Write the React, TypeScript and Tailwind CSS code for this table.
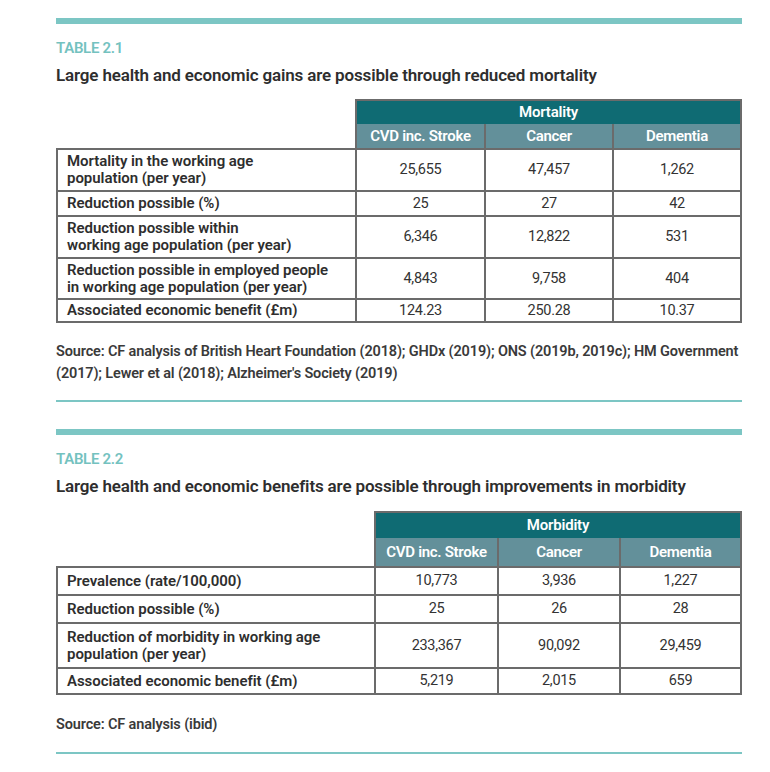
const font = { fontFamily: 'Roboto,"Liberation Sans",sans-serif' };

type Row = { label: string[]; values: string[]; h: string };

function DataTable({
  group,
  cols,
  rows,
  spacerW,
  labelW,
  subW,
  colW,
  headH,
  subH,
}: {
  group: string;
  cols: string[];
  rows: Row[];
  spacerW: string;
  labelW: string;
  subW: string[];
  colW: string[];
  headH: string;
  subH: string;
}) {
  return (
    <div className="w-[686px]">
      <div className="flex">
        <div className={spacerW} />
        <div className="flex-1 border-2 border-b-0 border-[#6b6b6b]">
          <div className={`${headH} bg-[#0f6b73] text-white font-semibold text-[15px] tracking-[-0.2px] flex items-center justify-center`}>
            {group}
          </div>
          <div className="flex">
            {cols.map((c, i) => (
              <div
                key={c}
                className={`${subW[i]} ${subH} ${i > 0 ? 'border-l-2 border-[#6b6b6b]' : ''} bg-[#63909a] text-white font-semibold text-[15px] tracking-[-0.3px] flex items-center justify-center`}
              >
                {c}
              </div>
            ))}
          </div>
        </div>
      </div>
      <div className="border-2 border-[#6b6b6b]">
        {rows.map((r, ri) => (
          <div key={ri} className={`flex ${r.h} ${ri > 0 ? 'border-t-2 border-[#6b6b6b]' : ''}`}>
            <div
              className={`${labelW} pl-[9px] flex flex-col justify-center text-[15px] leading-[17px] font-semibold tracking-[-0.05px] text-[#2e2e2e]`}
            >
              {r.label.map((l) => (
                <span key={l} className="whitespace-nowrap">
                  {l}
                </span>
              ))}
            </div>
            {r.values.map((v, i) => (
              <div
                key={i}
                className={`${colW[i]} border-l-2 border-[#6b6b6b] flex items-center justify-center text-[14.5px] tracking-[-0.3px] text-[#333]`}
              >
                {v}
              </div>
            ))}
          </div>
        ))}
      </div>
    </div>
  );
}

export default function App() {
  return (
    <div className="bg-white w-[770px] min-h-[772px]" style={font}>
      <div className="ml-[56px] w-[686px] pt-[18px]">
        <div className="h-[6px] bg-[#7cc6c4]" />
        <div className="mt-[14px] text-[#74c2bf] font-semibold text-[15px] leading-[20px] tracking-[-0.3px]">TABLE 2.1</div>
        <h2 className="mt-[6px] text-[#2e2e2e] font-semibold text-[17px] leading-[22px] tracking-[-0.15px] whitespace-nowrap">
          Large health and economic gains are possible through reduced mortality
        </h2>
        <div className="mt-[13px]">
          <DataTable
            group="Mortality"
            cols={['CVD inc. Stroke', 'Cancer', 'Dementia']}
            spacerW="w-[299px]"
            labelW="w-[297px]"
            subW={['w-[127px]', 'w-[128px]', 'w-[128px]']}
            colW={['w-[129px]', 'w-[128px]', 'w-[128px]']}
            headH="h-[23px]"
            subH="h-[24px]"
            rows={[
              { label: ['Mortality in the working age', 'population (per year)'], values: ['25,655', '47,457', '1,262'], h: 'h-[40px]' },
              { label: ['Reduction possible (%)'], values: ['25', '27', '42'], h: 'h-[25px]' },
              { label: ['Reduction possible within', 'working age population (per year)'], values: ['6,346', '12,822', '531'], h: 'h-[42px]' },
              { label: ['Reduction possible in employed people', 'in working age population (per year)'], values: ['4,843', '9,758', '404'], h: 'h-[41px]' },
              { label: ['Associated economic benefit (£m)'], values: ['124.23', '250.28', '10.37'], h: 'h-[23px]' },
            ]}
          />
        </div>
        <p className="mt-[18px] text-[14.5px] leading-[22px] font-semibold tracking-[-0.15px] text-[#3a3a3a] whitespace-nowrap">
          Source: CF analysis of British Heart Foundation (2018); GHDx (2019); ONS (2019b, 2019c); HM Government
          <br />
          (2017); Lewer et al (2018); Alzheimer's Society (2019)
        </p>
        <div className="mt-[15px] h-[2px] bg-[#7cc6c4]" />
        <div className="mt-[27px] h-[6px] bg-[#7cc6c4]" />
        <div className="mt-[14px] text-[#74c2bf] font-semibold text-[15px] leading-[20px] tracking-[-0.3px]">TABLE 2.2</div>
        <h2 className="mt-[6px] text-[#2e2e2e] font-semibold text-[17px] leading-[22px] tracking-[-0.15px] whitespace-nowrap">
          Large health and economic benefits are possible through improvements in morbidity
        </h2>
        <div className="mt-[14px]">
          <DataTable
            group="Morbidity"
            cols={['CVD inc. Stroke', 'Cancer', 'Dementia']}
            spacerW="w-[318px]"
            labelW="w-[316px]"
            subW={['w-[121px]', 'w-[122px]', 'w-[121px]']}
            colW={['w-[123px]', 'w-[122px]', 'w-[121px]']}
            headH="h-[25px]"
            subH="h-[28px]"
            rows={[
              { label: ['Prevalence (rate/100,000)'], values: ['10,773', '3,936', '1,227'], h: 'h-[26px]' },
              { label: ['Reduction possible (%)'], values: ['25', '26', '28'], h: 'h-[28px]' },
              { label: ['Reduction of morbidity in working age', 'population (per year)'], values: ['233,367', '90,092', '29,459'], h: 'h-[45px]' },
              { label: ['Associated economic benefit (£m)'], values: ['5,219', '2,015', '659'], h: 'h-[26px]' },
            ]}
          />
        </div>
        <p className="mt-[19px] text-[14.5px] leading-[22px] font-semibold tracking-[-0.15px] text-[#3a3a3a]">Source: CF analysis (ibid)</p>
        <div className="mt-[16px] h-[2px] bg-[#7cc6c4]" />
      </div>
    </div>
  );
}
